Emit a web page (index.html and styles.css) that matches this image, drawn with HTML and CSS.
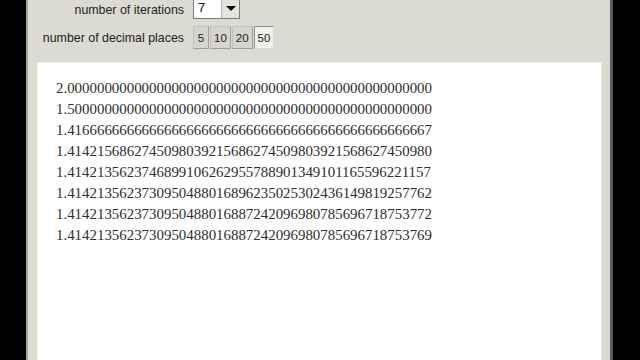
FILE: index.html
```html
<!DOCTYPE html>
<html lang="en">
<head>
  <meta charset="UTF-8" />
  <meta name="viewport" content="width=device-width, initial-scale=1.0"/>
  <title>Square root iterations</title>
  <link rel="stylesheet" href="styles.css">
</head>
<body>
  <div class="window">
    <div class="controls">
      <span class="label label-low">number of iterations</span>
      <div class="select">
        <span class="select-value">7</span>
        <span class="select-arrow"><span class="tri"></span></span>
      </div>

      <span class="label">number of decimal places</span>
      <div class="setter">
        <button class="opt">5</button>
        <button class="opt">10</button>
        <button class="opt">20</button>
        <button class="opt active">50</button>
      </div>
    </div>

    <div class="output">
      <div class="line">2.0000000000000000000000000000000000000000000000000</div>
      <div class="line">1.5000000000000000000000000000000000000000000000000</div>
      <div class="line">1.4166666666666666666666666666666666666666666666667</div>
      <div class="line">1.4142156862745098039215686274509803921568627450980</div>
      <div class="line">1.4142135623746899106262955788901349101165596221157</div>
      <div class="line">1.4142135623730950488016896235025302436149819257762</div>
      <div class="line">1.4142135623730950488016887242096980785696718753772</div>
      <div class="line">1.4142135623730950488016887242096980785696718753769</div>
    </div>
  </div>
</body>
</html>
```
FILE: styles.css
```css
body {
  margin: 0;
  background: #000;
  font-family: "Liberation Sans", Arial, sans-serif;
  overflow: hidden;
}

.window {
  margin-left: 26px;
  width: 587px;
  height: 360px;
  box-sizing: border-box;
  background: #dcdbd3;
  border-left: 2px solid #a3a3a0;
  border-right: 3px solid #5c5c5a;
  overflow: hidden;
}

.controls {
  display: grid;
  grid-template-columns: 156px auto;
  column-gap: 9px;
  row-gap: 7px;
  align-items: center;
  margin-top: -3px;
}

.label {
  text-align: right;
  font-size: 12.4px;
  color: #1e1e1e;
}

.label-low {
  padding-top: 4px;
}

.select {
  display: flex;
  width: 47px;
  height: 22px;
  box-sizing: border-box;
  border: 1px solid #7a7a78;
  background: #fff;
}

.select-value {
  flex: 1;
  padding-left: 4px;
  font-size: 13px;
  line-height: 20px;
  color: #111;
}

.select-arrow {
  width: 17px;
  display: flex;
  align-items: center;
  justify-content: center;
  background: #e4e3dd;
  border-left: 1px solid #b8b8b4;
}

.tri {
  width: 0;
  height: 0;
  border-left: 5px solid transparent;
  border-right: 5px solid transparent;
  border-top: 5px solid #000;
}

.setter {
  display: flex;
  gap: 1px;
}

.opt {
  height: 23px;
  min-width: 16px;
  padding: 0 3px;
  font-family: "Liberation Sans", Arial, sans-serif;
  font-size: 11.5px;
  color: #222;
  background: #d6d5cd;
  border: 1px solid #c4c3bb;
  border-right-color: #9e9d97;
  border-bottom-color: #9e9d97;
}

.opt.active {
  background: #f3f2ee;
  border-color: #8f8e89 #dcdbd5 #dcdbd5 #8f8e89;
}

.output {
  margin: 13px 8px 0 9px;
  height: 320px;
  background: #fff;
  border-top: 1px solid #e9e8e2;
  border-left: 1px solid #f0f0ee;
  border-right: 1px solid #e6e6e4;
  padding: 15px 0 0 18px;
}

.line {
  font-family: "Liberation Serif", "Times New Roman", serif;
  font-size: 14.9px;
  line-height: 21px;
  color: #2e2e2e;
  white-space: nowrap;
}
```
